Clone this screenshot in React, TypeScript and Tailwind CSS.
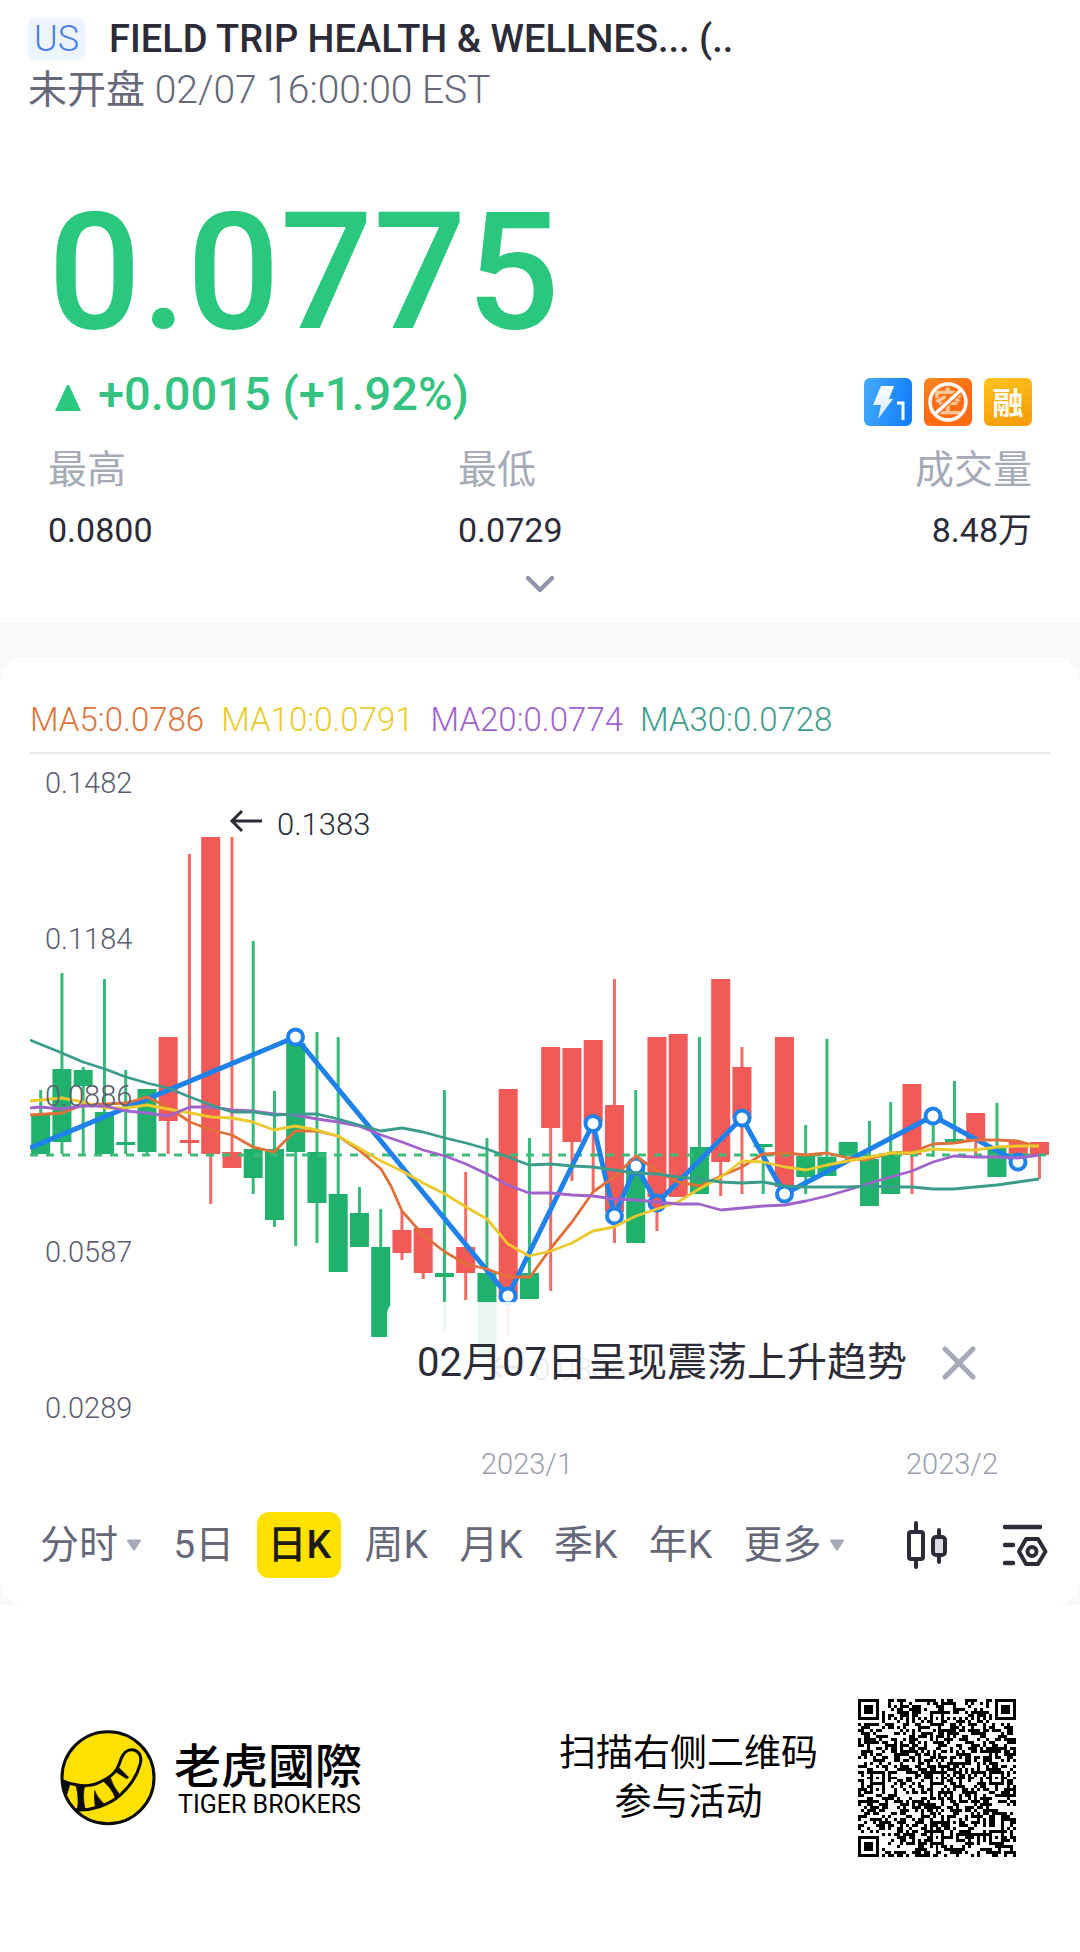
import React, { useState } from "react";
import { ChevronDown, X } from "lucide-react";

type Candle = [side: "up" | "down", high: number, top: number, bottom: number, low: number];

const GREEN = "#20b26c";
const RED = "#f25a57";
const FIRST_X = 40.7;
const STEP = 21.25;

const candles: Candle[] = [
  ["down", 1091, 1115, 1155, 1155],
  ["down", 974, 1070, 1143, 1155],
  ["down", 1068, 1071, 1087, 1155],
  ["down", 980, 1113, 1155, 1155],
  ["down", 1071, 1143, 1145, 1155],
  ["down", 1090, 1090, 1153, 1155],
  ["up", 1038, 1038, 1122, 1155],
  ["up", 855, 1141, 1143, 1155],
  ["up", 838, 838, 1155, 1205],
  ["up", 838, 1153, 1169, 1169],
  ["down", 942, 1150, 1179, 1195],
  ["down", 1092, 1150, 1221, 1228],
  ["down", 1044, 1044, 1153, 1247],
  ["down", 1033, 1153, 1204, 1244],
  ["down", 1038, 1195, 1273, 1273],
  ["down", 1188, 1214, 1248, 1248],
  ["down", 1210, 1248, 1338, 1338],
  ["up", 1212, 1231, 1254, 1261],
  ["up", 1229, 1229, 1274, 1280],
  ["down", 1091, 1274, 1278, 1333],
  ["up", 1173, 1248, 1274, 1301],
  ["down", 1139, 1274, 1360, 1360],
  ["up", 1090, 1090, 1300, 1336],
  ["down", 1139, 1274, 1300, 1300],
  ["up", 1048, 1048, 1129, 1292],
  ["up", 1049, 1049, 1143, 1182],
  ["up", 1041, 1041, 1123, 1192],
  ["up", 980, 1106, 1213, 1244],
  ["down", 1091, 1165, 1244, 1244],
  ["up", 1038, 1038, 1198, 1232],
  ["up", 1035, 1035, 1198, 1198],
  ["down", 1038, 1148, 1195, 1195],
  ["up", 980, 980, 1163, 1197],
  ["up", 1048, 1068, 1119, 1195],
  ["down", 1145, 1145, 1147, 1195],
  ["up", 1038, 1038, 1188, 1195],
  ["down", 1126, 1157, 1178, 1195],
  ["down", 1040, 1158, 1177, 1177],
  ["down", 1143, 1143, 1157, 1157],
  ["down", 1122, 1160, 1207, 1207],
  ["down", 1103, 1154, 1195, 1195],
  ["up", 1085, 1085, 1156, 1195],
  ["down", 1117, 1117, 1119, 1158],
  ["down", 1082, 1140, 1143, 1143],
  ["up", 1114, 1114, 1142, 1157],
  ["down", 1104, 1147, 1178, 1178],
  ["up", 1143, 1143, 1156, 1168],
  ["up", 1143, 1143, 1156, 1180],
];

const averages = [
  {
    label: "MA5:0.0786",
    text: "text-[#e0743c]",
    stroke: "#e2703a",
    points:
      "30,1116 62,1114 83,1106 105,1105 126,1104 147,1098 168,1108 190,1123 211,1131 232,1136 253,1148 274,1153 295,1132 317,1132 338,1137 359,1151 381,1170 391,1187 402,1212 423,1236 445,1253 466,1265 487,1270 508,1278 530,1278 551,1249 572,1223 593,1193 614,1178 636,1157 657,1172 678,1183 700,1187 721,1177 742,1168 763,1155 785,1154 806,1156 827,1154 848,1159 866,1161 891,1154 912,1153 933,1145 954,1144 975,1141 997,1141 1018,1142 1039,1148",
  },
  {
    label: "MA10:0.0791",
    text: "text-[#ebcb2c]",
    stroke: "#ecc92d",
    points:
      "30,1102 62,1099 83,1103 105,1109 126,1109 147,1106 168,1110 190,1114 211,1118 232,1119 253,1123 274,1131 295,1127 317,1131 338,1137 359,1149 381,1162 402,1172 423,1184 445,1195 466,1208 487,1220 508,1245 529,1257 551,1252 572,1244 593,1232 614,1228 636,1217 657,1210 678,1203 699,1190 721,1178 742,1162 763,1163 785,1168 806,1171 827,1166 848,1162 870,1158 891,1154 912,1154 933,1150 954,1151 975,1151 997,1148 1018,1147 1039,1147",
  },
  {
    label: "MA20:0.0774",
    text: "text-[#a063cc]",
    stroke: "#a063cc",
    points:
      "30,1109 40,1108 62,1110 83,1107 105,1107 126,1112 147,1114 168,1117 190,1108 211,1108 232,1111 253,1112 274,1115 295,1116 317,1120 338,1123 359,1127 381,1136 402,1143 423,1151 445,1157 466,1165 487,1175 508,1186 529,1194 551,1194 572,1196 593,1197 614,1200 636,1201 657,1203 678,1205 699,1205 721,1211 742,1209 763,1207 785,1206 806,1202 827,1197 848,1191 870,1184 891,1178 912,1172 933,1163 954,1157 975,1158 997,1158 1018,1159 1039,1156",
  },
  {
    label: "MA30:0.0728",
    text: "text-[#3f9d8c]",
    stroke: "#3c9c8b",
    points:
      "30,1041 62,1054 83,1063 105,1070 126,1078 147,1084 168,1089 190,1098 211,1106 232,1113 253,1113 274,1116 295,1115 317,1115 338,1120 359,1126 381,1132 402,1129 423,1133 445,1139 466,1144 487,1150 508,1158 529,1166 551,1165 572,1167 593,1168 614,1171 636,1174 657,1175 678,1178 699,1180 721,1183 742,1184 763,1183 785,1187 806,1188 848,1188 870,1187 891,1188 912,1188 933,1190 954,1190 975,1188 997,1186 1018,1183 1039,1180",
  },
];

const trend = [
  [30, 1149],
  [295.5, 1038],
  [508, 1297],
  [593, 1124.5],
  [614.5, 1217],
  [636, 1167],
  [657, 1204],
  [742, 1119],
  [784.5, 1195],
  [933, 1117],
  [1018, 1163],
];

const priceTicks = [
  { label: "0.1482", y: 783 },
  { label: "0.1184", y: 939 },
  { label: "0.0886", y: 1096 },
  { label: "0.0587", y: 1252 },
  { label: "0.0289", y: 1408 },
];

const stats = [
  { label: "最高", value: "0.0800", align: "" },
  { label: "最低", value: "0.0729", align: "" },
  { label: "成交量", value: "8.48万", align: "text-right" },
];

const periods = [
  { label: "分时", menu: true },
  { label: "5日" },
  { label: "日K" },
  { label: "周K" },
  { label: "月K" },
  { label: "季K" },
  { label: "年K" },
  { label: "更多", menu: true },
];

function BoltBadge() {
  return (
    <svg viewBox="0 0 48 48" className="w-12 h-12">
      <defs>
        <linearGradient id="bolt" x1="0" y1="0.3" x2="1" y2="0.5">
          <stop offset="0" stopColor="#43a9fb" />
          <stop offset="1" stopColor="#127efc" />
        </linearGradient>
        <linearGradient id="boltFill" x1="0" y1="0" x2="0" y2="1">
          <stop offset="0" stopColor="#ffffff" />
          <stop offset="1" stopColor="#cfe5ff" />
        </linearGradient>
      </defs>
      <rect width="48" height="48" rx="6" fill="url(#bolt)" />
      <path d="M17 8h13l-5 13h4L14 41l3-14H9z" fill="url(#boltFill)" />
      <path d="M33 25h6v17" fill="none" stroke="#fff" strokeWidth="3" />
    </svg>
  );
}

function NoShortBadge() {
  return (
    <svg viewBox="0 0 48 48" className="w-12 h-12">
      <defs>
        <linearGradient id="short" x1="0" y1="0" x2="0.4" y2="1">
          <stop offset="0" stopColor="#fb8a1f" />
          <stop offset="0.5" stopColor="#fd6d15" />
          <stop offset="1" stopColor="#ff6a13" />
        </linearGradient>
      </defs>
      <rect width="48" height="48" rx="6" fill="url(#short)" />
      <text x="24" y="35" textAnchor="middle" fontSize="29" fontWeight="700" fill="#ffc79a">
        空
      </text>
      <path d="M12 35 36 13" stroke="#fd7018" strokeWidth="6" />
      <circle cx="24" cy="24" r="18" fill="none" stroke="#fff" strokeWidth="3.500" />
      <path d="M11 36 37 12" stroke="#fff" strokeWidth="3.500" />
    </svg>
  );
}

function MarginBadge() {
  return (
    <svg viewBox="0 0 48 48" className="w-12 h-12">
      <defs>
        <linearGradient id="margin" x1="0" y1="0" x2="0.3" y2="1">
          <stop offset="0" stopColor="#fcc21c" />
          <stop offset="1" stopColor="#f8a00c" />
        </linearGradient>
      </defs>
      <rect width="48" height="48" rx="6" fill="url(#margin)" />
      <text x="24" y="36" textAnchor="middle" fontSize="31" fontWeight="700" fill="#fff">
        融
      </text>
    </svg>
  );
}

function PriceChart() {
  return (
    <svg viewBox="30 755 1020 740" className="block w-full font-light" role="img" aria-label="日K">
      {candles.map(([side, high, top, bottom, low], i) => {
        const x = FIRST_X + STEP * i;
        return (
          <g key={i} fill={side === "up" ? RED : GREEN}>
            <rect x={x - 1.5} y={high} width="3" height={low - high} opacity="0.9" />
            <rect x={x - 9.5} y={top} width="19" height={Math.max(bottom - top, 3)} />
          </g>
        );
      })}

      <line x1="30" y1="1156" x2="1050" y2="1156" stroke="#3dbb78" strokeWidth="3" strokeDasharray="8 8" />

      <polyline
        points={trend.map((p) => p.join(",")).join(" ")}
        fill="none"
        stroke="#1e82ea"
        strokeWidth="5"
        strokeLinejoin="round"
      />
      {trend.slice(1).map(([x, y]) => (
        <circle key={x} cx={x} cy={y} r="7.5" fill={x === 657 ? RED : "#fff"} stroke="#1e82ea" strokeWidth="4" />
      ))}

      {averages.map((ma) => (
        <polyline
          key={ma.label}
          points={ma.points}
          fill="none"
          stroke={ma.stroke}
          strokeWidth="2.8"
          strokeLinejoin="round"
        />
      ))}

      {priceTicks.map((tick) => (
        <text key={tick.label} x="45" y={tick.y + 11} fontSize="29" fill="#5c5e70">
          {tick.label}
        </text>
      ))}

      {/* Period high and low */}
      <g fill="none" stroke="#2b2c38" strokeWidth="3">
        <path d="M262 822h-30M242 812l-10 10 10 10" />
        <path d="M521 1368h-30M501 1358l-10 10 10 10" />
      </g>
      <text x="277" y="836" fontSize="31" fill="#2b2c38">
        0.1383
      </text>
      <text x="533" y="1381" fontSize="31" fill="#2b2c38">
        0.0388
      </text>

      <g fontSize="29" fill="#9a9fad" textAnchor="middle">
        <text x="527" y="1475">2023/1</text>
        <text x="952" y="1475">2023/2</text>
      </g>
    </svg>
  );
}

function Caret() {
  return (
    <svg viewBox="0 0 16 12" className="w-4 h-3">
      <path d="M2 0.5h12q1.600 0.400 0.800 1.800L9 11q-1 1-2 0L1.200 2.300Q0.400 0.900 2 0.500z" fill="#a5aab6" />
    </svg>
  );
}

function CandleIcon() {
  return (
    <svg viewBox="0 0 42 50" className="w-[42px] h-[50px]" fill="none" stroke="#2b2c38" strokeWidth="4" strokeLinecap="round">
      <path d="M11 3v8M11 39v8M34 10v6M34 36v6" />
      <rect x="4" y="12" width="14" height="27" rx="2" />
      <rect x="28" y="17" width="12" height="18" rx="3" fill="#dcdce2" />
    </svg>
  );
}

function SettingsIcon() {
  return (
    <svg viewBox="0 0 48 44" className="w-12 h-11" fill="none" stroke="#2b2c38" strokeWidth="4.500" strokeLinecap="round" strokeLinejoin="round">
      <path d="M3 4h35M3 22h8M3 40h8" />
      <path d="M24 16h12l7.500 12.500L36 41H24l-7-12.500z" strokeWidth="4" />
      <circle cx="30" cy="28.500" r="4.500" strokeWidth="4" />
    </svg>
  );
}

function TigerLogo() {
  return (
    <svg viewBox="0 0 288 288" className="w-24 h-24 shrink-0">
      <clipPath id="disc">
        <circle cx="144" cy="143" r="138" />
      </clipPath>
      <circle cx="144" cy="143" r="138" fill="#ffe100" />
      <g clipPath="url(#disc)" stroke="#0b0b0b" strokeLinejoin="round">
        <path
          d="M-6 146C30 166 84 176 120 156C160 138 172 122 182 90C190 66 206 56 222 60C240 66 246 82 240 104C230 142 206 172 182 194C150 224 90 246 40 238"
          fill="none"
          strokeWidth="9"
        />
        <path
          d="M4 152L30 162L20 196ZM48 168L74 168Q66 200 76 240L52 240Q58 200 48 168ZM104 182Q110 200 134 224L106 232Q102 206 104 182ZM128 152L150 140Q158 168 178 192L166 204Q154 172 128 152ZM168 126L178 114L206 142L200 146Z"
          fill="#0b0b0b"
          strokeWidth="2"
        />
      </g>
      <circle cx="144" cy="143" r="138" fill="none" stroke="#0b0b0b" strokeWidth="9" />
    </svg>
  );
}

const QR_SIZE = 53;

function inSquare(x: number, y: number, cx: number, cy: number, r: number) {
  return Math.max(Math.abs(x - cx), Math.abs(y - cy)) <= r;
}

function buildQr() {
  const finders = [
    [3, 3],
    [QR_SIZE - 4, 3],
    [3, QR_SIZE - 4],
  ];
  const marks = [
    [26, 6],
    [6, 26],
    [26, 26],
    [46, 26],
    [26, 46],
    [46, 46],
  ];
  let seed = 20230207;
  let d = "";
  for (let y = 0; y < QR_SIZE; y++) {
    for (let x = 0; x < QR_SIZE; x++) {
      seed = (seed * 1103515245 + 12345) % 2147483648;
      let dark = seed / 2147483648 > 0.5;
      if (x === 6 || y === 6) dark = (x + y) % 2 === 0;
      for (const [cx, cy] of marks) {
        if (inSquare(x, y, cx, cy, 2)) dark = Math.max(Math.abs(x - cx), Math.abs(y - cy)) !== 1;
      }
      for (const [cx, cy] of finders) {
        if (inSquare(x, y, cx, cy, 4)) {
          const ring = Math.max(Math.abs(x - cx), Math.abs(y - cy));
          dark = ring !== 2 && ring !== 4;
        }
      }
      if (dark) d += `M${x} ${y}h1v1h-1z`;
    }
  }
  return d;
}

const qrPath = buildQr();

function QrCode() {
  return (
    <svg viewBox={`0 0 ${QR_SIZE} ${QR_SIZE}`} className="w-[158px] h-[158px] shrink-0" shapeRendering="crispEdges">
      <path d={qrPath} fill="#000" />
    </svg>
  );
}

function QuoteHeader() {
  return (
    <header className="px-7 pt-4">
      <div className="flex items-center gap-6">
        <span className="rounded-md bg-[#eef4fe] px-1.5 text-4xl leading-[42px] font-light text-[#4a80e4]">US</span>
        <h1 className="text-[38px] leading-[46px] font-medium text-[#2b2c38] whitespace-nowrap">
          FIELD TRIP HEALTH &amp; WELLNES... (..
        </h1>
      </div>
      <p className="text-[39px] leading-[56px] text-[#666879]">
        未开盘 <span className="font-light">02/07 16:00:00 EST</span>
      </p>
    </header>
  );
}

function QuoteSummary() {
  return (
    <section className="px-12 pt-[74px] pb-3.5">
      <div className="text-[164px] leading-[160px] font-medium text-[#2ac77e]">0.0775</div>
      <div className="mt-2.5 flex justify-between">
        <div className="flex items-center gap-4 pl-1.5 text-[47px] leading-[60px] font-medium text-[#34c381]">
          <svg viewBox="0 0 28 28" className="w-7 h-7 mt-2">
            <path d="M13 1h2l12 26H1z" fill="#2ac77e" />
          </svg>
          +0.0015 (+1.92%)
        </div>
        <div className="mt-4 flex gap-3">
          <BoltBadge />
          <NoShortBadge />
          <MarginBadge />
        </div>
      </div>
      <dl className="mt-3.5 grid grid-cols-[5fr_4fr_3fr] leading-[60px]">
        {stats.map((stat) => (
          <div key={stat.label} className={stat.align}>
            <dt className="text-[39px] text-[#a7abb7]">{stat.label}</dt>
            <dd className="text-[34px] text-[#2b2c38]">{stat.value}</dd>
          </div>
        ))}
      </dl>
      <button type="button" aria-label="展开" className="mx-auto block">
        <ChevronDown className="w-12 h-12 text-[#8d95a8]" strokeWidth={2.2} />
      </button>
    </section>
  );
}

function ChartCard() {
  const [period, setPeriod] = useState("日K");
  const [showTip, setShowTip] = useState(true);

  return (
    <section className="rounded-3xl bg-white px-[30px] pt-[42px] pb-[27px]">
      <div className="flex gap-[17px] border-b-2 border-[#ebebee] pb-3 text-[33px] leading-10 font-light">
        {averages.map((ma) => (
          <span key={ma.label} className={ma.text}>
            {ma.label}
          </span>
        ))}
      </div>

      <div className="relative">
        <PriceChart />
        {showTip && (
          <div className="absolute left-[35%] right-0 top-[74%] flex h-[122px] items-center rounded-xl bg-white/90 pl-[30px] text-[40px] text-[#2b2c38]">
            02月07日呈现震荡上升趋势
            <button type="button" aria-label="关闭" className="ml-6" onClick={() => setShowTip(false)}>
              <X className="w-14 h-14 text-[#a5aab6]" strokeWidth={2.2} />
            </button>
          </div>
        )}
      </div>

      <div className="mt-[18px] flex items-center justify-between pl-0.5 text-[39px] leading-[66px] text-[#666879]">
        {periods.map((p) => (
          <button
            key={p.label}
            type="button"
            onClick={() => setPeriod(p.label)}
            className={
              period === p.label
                ? "rounded-xl bg-[#ffe100] px-2.5 font-medium text-[#1d1c14]"
                : "flex items-center gap-2 px-2"
            }
          >
            {p.label}
            {p.menu && <Caret />}
          </button>
        ))}
        <button type="button" aria-label="K线样式" className="ml-9">
          <CandleIcon />
        </button>
        <button type="button" aria-label="指标设置" className="ml-10">
          <SettingsIcon />
        </button>
      </div>
    </section>
  );
}

function ShareFooter() {
  return (
    <footer className="flex items-center justify-between bg-white pl-[60px] pr-16 pt-[94px] pb-[92px] text-black">
      <div className="flex items-center gap-[18px]">
        <TigerLogo />
        <div>
          <div className="text-[47px] leading-[54px] font-medium font-['Noto_Sans_CJK_TC']">老虎國際</div>
          <div className="pl-1 text-[25px] leading-[30px]">TIGER BROKERS</div>
        </div>
      </div>
      <div className="flex items-center gap-10">
        <p className="text-center text-[37px] leading-[49px]">
          扫描右侧二维码
          <br />
          参与活动
        </p>
        <QrCode />
      </div>
    </footer>
  );
}

export default function App() {
  return (
    <div lang="zh-CN" className="min-h-screen bg-white font-[Roboto,'Noto_Sans_CJK_SC',sans-serif]">
      <QuoteHeader />
      <QuoteSummary />
      <div className="bg-[#f8f8f9] pt-9">
        <ChartCard />
      </div>
      <ShareFooter />
    </div>
  );
}
